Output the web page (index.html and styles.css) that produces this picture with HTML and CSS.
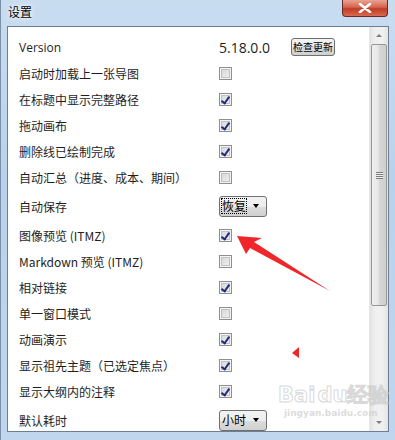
FILE: index.html
```html
<!DOCTYPE html>
<html lang="zh">
<head>
    <meta charset="UTF-8">
    <title>设置</title>
    <link rel="stylesheet" href="styles.css">
</head>
<body>
    <div class="window">
        <div class="titlebar">
            <span class="title">设置</span>
            <div class="close-btn">
                <svg width="16" height="10" viewBox="0 0 16 10"><path d="M3 1 L13 9 M13 1 L3 9" stroke="#fff" stroke-width="2.6" stroke-linecap="round"/></svg>
            </div>
        </div>

        <div class="client">
            <div class="rows">
                <div class="row">
                    <span class="label latin">Version</span>
                    <span class="value version">5.18.0.0</span>
                    <span class="btn">检查更新</span>
                </div>
                <div class="row"><span class="label">启动时加载上一张导图</span><span class="check"></span></div>
                <div class="row"><span class="label">在标题中显示完整路径</span><span class="check on"></span></div>
                <div class="row"><span class="label">拖动画布</span><span class="check on"></span></div>
                <div class="row"><span class="label">删除线已绘制完成</span><span class="check on"></span></div>
                <div class="row"><span class="label">自动汇总（进度、成本、期间）</span><span class="check"></span></div>
                <div class="row tall">
                    <span class="label">自动保存</span>
                    <span class="combo"><span class="combo-text focus">恢复</span><span class="combo-arrow"></span></span>
                </div>
                <div class="row"><span class="label">图像预览 (ITMZ)</span><span class="check on"></span></div>
                <div class="row"><span class="label">Markdown 预览 (ITMZ)</span><span class="check"></span></div>
                <div class="row"><span class="label">相对链接</span><span class="check on"></span></div>
                <div class="row"><span class="label">单一窗口模式</span><span class="check"></span></div>
                <div class="row"><span class="label">动画演示</span><span class="check on"></span></div>
                <div class="row"><span class="label">显示祖先主题（已选定焦点）</span><span class="check on"></span></div>
                <div class="row"><span class="label">显示大纲内的注释</span><span class="check on"></span></div>
                <div class="row tall">
                    <span class="label">默认耗时</span>
                    <span class="combo"><span class="combo-text">小时</span><span class="combo-arrow"></span></span>
                </div>
            </div>
            <div class="scrollbar">
                <div class="sb-arrow up"></div>
                <div class="sb-track">
                    <div class="sb-thumb"><span class="grip"></span></div>
                </div>
                <div class="sb-arrow down"></div>
            </div>
        </div>
    </div>

    <div class="watermark">
        <div class="wm-main">Bai<span class="wm-du">du</span>经验</div>
        <div class="wm-sub">jingyan.baidu.com</div>
    </div>

    <svg class="annot" width="395" height="440" viewBox="0 0 395 440">
        <polygon points="237,236 262,238 254,242 330,291 250,248 246,254" fill="#f0262a"/>
        <polygon points="292,353 299,347 299,358" fill="#f0262a"/>
    </svg>
</body>
</html>
```

FILE: styles.css
```css
body {
    margin: 0;
    width: 395px;
    height: 440px;
    overflow: hidden;
    font-family: "Noto Sans CJK SC", sans-serif;
    font-size: 12px;
    color: #1e1e1e;
}

.window {
    width: 395px;
    height: 440px;
    background: linear-gradient(180deg, #c9ddf1 0%, #b9d2eb 40%, #bfd6ee 100%);
    border-left: 1px solid #7a8fa8;
    box-sizing: border-box;
    display: flex;
    flex-direction: column;
}

.titlebar {
    height: 26px;
    display: flex;
    justify-content: space-between;
    align-items: flex-start;
    padding: 0 7px 0 7px;
    flex-shrink: 0;
}

.title {
    font-size: 12px;
    margin-top: 3px;
    color: #000;
    text-shadow: 0 0 6px #fff, 0 0 3px #fff;
}

.close-btn {
    width: 46px;
    height: 17px;
    margin-right: 0;
    box-sizing: border-box;
    border: 1px solid #6b2a25;
    border-top: none;
    border-radius: 0 0 4px 4px;
    background: linear-gradient(180deg, #e8a493 0%, #d5654d 45%, #c13b26 55%, #d86b4f 100%);
    display: flex;
    align-items: center;
    justify-content: center;
}

.client {
    height: 404px;
    margin: 0 6px 0 6px;
    border: 1px solid #6d7e92;
    background: #fff;
    display: flex;
    overflow: hidden;
}

.rows {
    flex: 1;
    padding: 7px 0 0 11px;
}

.row {
    height: 26px;
    display: flex;
    align-items: center;
}

.row.tall {
    height: 32px;
}

.label {
    width: 200px;
    flex-shrink: 0;
    white-space: nowrap;
}

.latin,
.version {
    font-family: "Open Sans", sans-serif;
}

.version {
    font-size: 14px;
    width: 72px;
}

.btn {
    width: 44px;
    height: 18px;
    box-sizing: border-box;
    border: 1px solid #707070;
    border-radius: 3px;
    background: linear-gradient(180deg, #f4f4f4 0%, #ebebeb 50%, #dddddd 51%, #cfcfcf 100%);
    font-size: 10px;
    line-height: 16px;
    text-align: center;
    white-space: nowrap;
    overflow: hidden;
    color: #000;
}

.check {
    width: 13px;
    height: 13px;
    box-sizing: border-box;
    border: 1px solid #8e8f8f;
    background: linear-gradient(135deg, #d2d3d6 0%, #f2f3f4 100%);
    box-shadow: inset 0 0 0 1px #f4f4f4, inset 0 0 0 2px #bfc2c6;
    position: relative;
}

.check.on::after {
    content: "";
    position: absolute;
    left: 3px;
    top: 1px;
    width: 3px;
    height: 7px;
    border: solid #202c7a;
    border-width: 0 2px 2px 0;
    transform: rotate(35deg);
}

.combo {
    width: 48px;
    height: 21px;
    box-sizing: border-box;
    border: 1px solid #707070;
    border-radius: 3px;
    background: linear-gradient(180deg, #f3f3f3 0%, #ececec 50%, #dddddd 51%, #d0d0d0 100%);
    display: flex;
    align-items: center;
    padding-left: 2px;
}

.combo-text {
    font-size: 12px;
    line-height: 14px;
    color: #000;
}

.combo-text.focus {
    outline: 1px dotted #000;
}

.combo-arrow {
    margin-left: auto;
    margin-right: 7px;
    width: 0;
    height: 0;
    border-left: 3.5px solid transparent;
    border-right: 3.5px solid transparent;
    border-top: 4px solid #000;
}

.scrollbar {
    width: 18px;
    flex-shrink: 0;
    background: linear-gradient(90deg, #e3e3e3 0%, #f0f0f0 30%, #f0f0f0 70%, #e3e3e3 100%);
    border-left: 1px solid #e6e6e6;
    display: flex;
    flex-direction: column;
}

.sb-arrow {
    height: 17px;
    display: flex;
    justify-content: center;
    align-items: center;
}

.sb-arrow::after {
    content: "";
    width: 0;
    height: 0;
    border-left: 3px solid transparent;
    border-right: 3px solid transparent;
}

.sb-arrow.up::after {
    border-bottom: 3px solid #7d7d7d;
}

.sb-arrow.down::after {
    border-top: 3px solid #7d7d7d;
}

.sb-track {
    flex: 1;
    padding: 0 1px;
}

.sb-thumb {
    height: 262px;
    box-sizing: border-box;
    border: 1px solid #979797;
    border-radius: 2px;
    background: linear-gradient(90deg, #f0f0f0 0%, #e6e6e6 45%, #d6d6d6 55%, #cfcfcf 100%);
    display: flex;
    justify-content: center;
    align-items: center;
}

.grip {
    width: 7px;
    height: 7px;
    background: repeating-linear-gradient(180deg, #7c7c7c 0 1px, #efefef 1px 2px);
}

.watermark {
    position: absolute;
    left: 278px;
    top: 382px;
    color: rgba(205, 205, 205, 0.7);
    font-family: "DejaVu Sans", sans-serif;
    pointer-events: none;
}

.wm-main {
    font-size: 21px;
    font-weight: bold;
    line-height: 26px;
    color: rgba(255, 255, 255, 0.2);
    -webkit-text-stroke: 1px rgba(200, 200, 200, 0.7);
}

.wm-du {
    margin-left: 2px;
}

.wm-sub {
    font-size: 9px;
    margin-left: 6px;
    font-weight: bold;
    line-height: 10px;
}

.annot {
    position: absolute;
    left: 0;
    top: 0;
    pointer-events: none;
}
```
